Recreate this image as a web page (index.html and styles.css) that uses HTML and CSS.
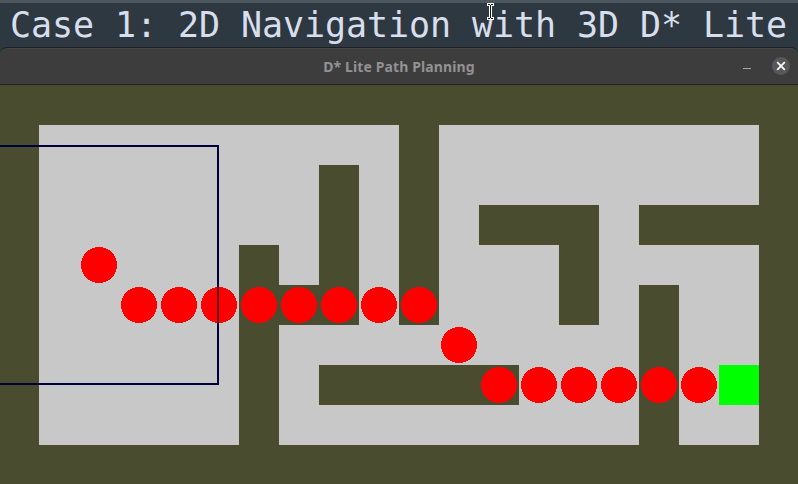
FILE: index.html
```html
<!DOCTYPE html>
<html lang="en">
<head>
<meta charset="utf-8">
<title>D* Lite Path Planning</title>
<link rel="stylesheet" href="styles.css">
</head>
<body>
<header class="banner">
  <h1 class="banner-title">Case 1: 2D Navigation with 3D D* Lite</h1>
  <svg class="cursor" width="9" height="17" viewBox="0 0 9 17" aria-hidden="true">
    <path class="cursor-outline" d="M1 1.5H8M4.5 2V15M1 15.5H8"/>
    <path class="cursor-core" d="M2 1.5H4M5 1.5H7M4.5 2V15M2 15.5H4M5 15.5H7"/>
  </svg>
</header>
<main class="window">
  <div class="titlebar">
    <span class="window-title">D* Lite Path Planning</span>
    <div class="controls">
      <span class="minimize"></span>
      <span class="close">
        <svg width="18" height="18" viewBox="0 0 18 18" aria-hidden="true"><path d="M5.2 5.2L12.8 12.8M12.8 5.2L5.2 12.8"/></svg>
      </span>
    </div>
  </div>
  <svg class="map" width="798" height="399" viewBox="0 85 798 399">
    <rect class="free" x="39" y="125" width="720" height="320"/>
    <g class="wall">
      <rect x="399" y="125" width="40" height="200"/>
      <rect x="319" y="165" width="40" height="160"/>
      <rect x="279" y="285" width="40" height="40"/>
      <rect x="239" y="245" width="40" height="200"/>
      <rect x="319" y="365" width="200" height="40"/>
      <rect x="479" y="205" width="120" height="40"/>
      <rect x="559" y="245" width="40" height="80"/>
      <rect x="639" y="205" width="120" height="40"/>
      <rect x="639" y="285" width="40" height="160"/>
    </g>
    <rect class="goal" x="719" y="365" width="40" height="40"/>
    <g class="path">
      <circle cx="99" cy="265" r="18"/>
      <circle cx="139" cy="305" r="18"/>
      <circle cx="179" cy="305" r="18"/>
      <circle cx="219" cy="305" r="18"/>
      <circle cx="259" cy="305" r="18"/>
      <circle cx="299" cy="305" r="18"/>
      <circle cx="339" cy="305" r="18"/>
      <circle cx="379" cy="305" r="18"/>
      <circle cx="419" cy="305" r="18"/>
      <circle cx="459" cy="345" r="18"/>
      <circle cx="499" cy="385" r="18"/>
      <circle cx="539" cy="385" r="18"/>
      <circle cx="579" cy="385" r="18"/>
      <circle cx="619" cy="385" r="18"/>
      <circle cx="659" cy="385" r="18"/>
      <circle cx="699" cy="385" r="18"/>
    </g>
    <path class="range" d="M-2 146H218V384H-2"/>
    <path class="range-overlap" d="M218 287V323"/>
  </svg>
</main>
</body>
</html>
```
FILE: styles.css
```css
body {
  margin: 0;
  width: 798px;
  height: 484px;
  overflow: hidden;
  background: #2e3841;
}

.banner {
  position: relative;
  box-sizing: border-box;
  height: 47px;
  border-top: 3px solid #4b565f;
  background: #2e3841;
}

.banner-title {
  margin: 0;
  padding-left: 10px;
  font: 400 35px/44px "DejaVu Sans Mono", monospace;
  letter-spacing: -0.07px;
  white-space: pre;
  color: #d8deec;
}

.cursor {
  position: absolute;
  left: 486px;
  top: 0;
}

.cursor path {
  fill: none;
}

.cursor-outline {
  stroke: #fff;
  stroke-width: 3;
}

.cursor-core {
  stroke: #111;
  stroke-width: 1;
}

.window {
  display: flex;
  flex-direction: column;
}

.titlebar {
  display: grid;
  grid-template-columns: 1fr auto 1fr;
  align-items: center;
  box-sizing: border-box;
  height: 38px;
  border-top: 1px solid #1c2024;
  border-bottom: 1px solid #252525;
  border-radius: 7px 7px 0 0;
  background: #3d3d3d;
  box-shadow: inset 0 1px #474747;
}

.window-title {
  grid-column: 2;
  padding-top: 2px;
  font: 700 14px/20px "Noto Sans", sans-serif;
  letter-spacing: 0.12px;
  color: #929292;
  white-space: nowrap;
}

.controls {
  display: flex;
  justify-content: flex-end;
  align-items: center;
  gap: 21px;
  padding-right: 8px;
}

.minimize {
  width: 8px;
  height: 1px;
  margin-top: 4px;
  background: #a5a5a5;
}

.close {
  width: 18px;
  height: 18px;
  border-radius: 50%;
  background: #58585a;
}

.close svg {
  display: block;
  fill: none;
  stroke: #fff;
  stroke-width: 1.7;
}

.map {
  display: block;
  background: #4a4c30;
}

.free {
  fill: #c8c8c8;
}

.wall {
  fill: #4a4c30;
}

.goal {
  fill: #0f0;
}

.path {
  fill: #f00;
  shape-rendering: crispEdges;
}

.range,
.range-overlap {
  fill: none;
  stroke: #00003c;
  stroke-width: 2;
}

.range-overlap {
  stroke: #5a0f1e;
}
```
